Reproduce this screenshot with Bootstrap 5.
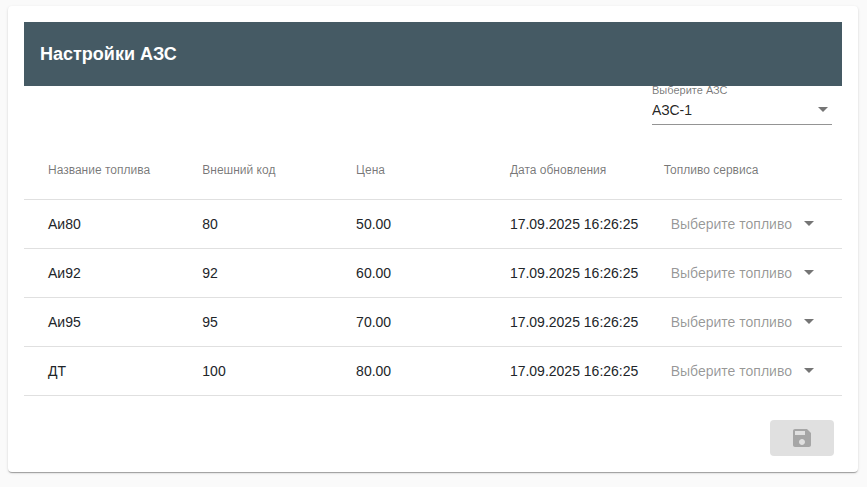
<!DOCTYPE html>
<html lang="ru">
<head>
    <meta charset="UTF-8">
    <meta name="viewport" content="width=device-width, initial-scale=1">
    <title>Настройки АЗС</title>
    <!-- Bootstrap CSS -->
    <link href="https://cdn.jsdelivr.net/npm/bootstrap@5.3.2/dist/css/bootstrap.min.css" rel="stylesheet">
    <style>
        body {
            background: #fafafa;
            color: rgba(0, 0, 0, 0.87);
            font-family: "Liberation Sans", Arial, sans-serif;
            font-size: 14px;
            line-height: 20px;
        }
        .settings-card {
            margin: 6px 9px 8px 8px;
            border-radius: 4px;
            box-shadow: 0 2px 1px -1px rgba(0, 0, 0, 0.2), 0 1px 1px 0 rgba(0, 0, 0, 0.14), 0 1px 3px 0 rgba(0, 0, 0, 0.12);
        }
        .toolbar {
            height: 64px;
            background: #455a64;
        }
        .toolbar h1 {
            font-size: 18px;
            font-weight: bold;
            line-height: 24px;
        }
        .station-field {
            width: 180px;
            margin-right: 10px;
            margin-bottom: 17px;
        }
        .station-field label {
            font-size: 11px;
            line-height: 8px;
            color: rgba(0, 0, 0, 0.54);
        }
        /* Списки со стрелкой */
        .flat-select {
            border: 0;
            border-radius: 0;
            font-size: 14px;
            line-height: 20px;
            color: rgba(0, 0, 0, 0.87);
            background-color: transparent;
            background-image: url("data:image/svg+xml,%3csvg xmlns='http://www.w3.org/2000/svg' viewBox='0 0 10 5'%3e%3cpath fill='%23757575' d='M0 0h10L5 5z'/%3e%3c/svg%3e");
            background-size: 10px 5px;
            background-position: right 4px center;
        }
        .station-field .flat-select {
            padding: 6px 16px 4px 0;
            border-bottom: 1px solid #949494;
        }
        .fuel-select {
            width: 144px;
            margin-left: 7px;
            padding: 0 16px 0 0;
            color: rgba(0, 0, 0, 0.42);
            background-position: right 1px center;
        }
        /* Таблица топлива */
        .fuel-table {
            table-layout: fixed;
        }
        .fuel-table th,
        .fuel-table td {
            padding: 0;
            height: 49px;
            color: inherit;
            background: transparent;
            border-bottom: 1px solid #e0e0e0;
            vertical-align: middle;
            white-space: nowrap;
        }
        .fuel-table th {
            height: 57px;
            font-size: 12px;
            font-weight: normal;
            color: rgba(0, 0, 0, 0.54);
        }
        .fuel-table th:first-child,
        .fuel-table th:last-child {
            width: 21.8%;
        }
        .fuel-table th:first-child,
        .fuel-table td:first-child {
            padding-left: 24px;
        }
        .save-btn,
        .save-btn:disabled {
            width: 64px;
            height: 36px;
            border: 0;
            border-radius: 4px;
            background: #e0e0e0;
            color: #a6a6a6;
            opacity: 1;
        }
    </style>
</head>
<body>
    <main class="settings-card bg-white p-3">
        <header class="toolbar d-flex align-items-center px-3">
            <h1 class="text-white mb-0">Настройки АЗС</h1>
        </header>

        <!-- Выбор АЗС -->
        <div class="station-field ms-auto">
            <label for="station" class="d-block">Выберите АЗС</label>
            <select class="form-select flat-select" id="station">
                <option selected>АЗС-1</option>
            </select>
        </div>

        <!-- Виды топлива -->
        <table class="table fuel-table mb-4">
            <thead>
                <tr>
                    <th scope="col">Название топлива</th>
                    <th scope="col">Внешний код</th>
                    <th scope="col">Цена</th>
                    <th scope="col">Дата обновления</th>
                    <th scope="col">Топливо сервиса</th>
                </tr>
            </thead>
            <tbody>
                <tr>
                    <td>Аи80</td>
                    <td>80</td>
                    <td>50.00</td>
                    <td>17.09.2025 16:26:25</td>
                    <td>
                        <select class="form-select flat-select fuel-select" aria-label="Топливо сервиса для Аи80">
                            <option value="" selected>Выберите топливо</option>
                        </select>
                    </td>
                </tr>
                <tr>
                    <td>Аи92</td>
                    <td>92</td>
                    <td>60.00</td>
                    <td>17.09.2025 16:26:25</td>
                    <td>
                        <select class="form-select flat-select fuel-select" aria-label="Топливо сервиса для Аи92">
                            <option value="" selected>Выберите топливо</option>
                        </select>
                    </td>
                </tr>
                <tr>
                    <td>Аи95</td>
                    <td>95</td>
                    <td>70.00</td>
                    <td>17.09.2025 16:26:25</td>
                    <td>
                        <select class="form-select flat-select fuel-select" aria-label="Топливо сервиса для Аи95">
                            <option value="" selected>Выберите топливо</option>
                        </select>
                    </td>
                </tr>
                <tr>
                    <td>ДТ</td>
                    <td>100</td>
                    <td>80.00</td>
                    <td>17.09.2025 16:26:25</td>
                    <td>
                        <select class="form-select flat-select fuel-select" aria-label="Топливо сервиса для ДТ">
                            <option value="" selected>Выберите топливо</option>
                        </select>
                    </td>
                </tr>
            </tbody>
        </table>

        <!-- Кнопка сохранения -->
        <div class="d-flex justify-content-end pe-2">
            <button type="button" class="btn save-btn d-flex align-items-center justify-content-center p-0" aria-label="Сохранить" disabled>
                <svg width="24" height="24" viewBox="0 0 24 24" fill="currentColor" aria-hidden="true">
                    <path d="M17 3H5c-1.11 0-2 .9-2 2v14c0 1.1.89 2 2 2h14c1.1 0 2-.9 2-2V7l-4-4zm-5 16c-1.66 0-3-1.34-3-3s1.34-3 3-3 3 1.34 3 3-1.34 3-3 3zm3-10H5V5h10v4z"/>
                </svg>
            </button>
        </div>
    </main>

    <!-- Bootstrap JS -->
    <script src="https://cdn.jsdelivr.net/npm/bootstrap@5.3.2/dist/js/bootstrap.bundle.min.js"></script>
</body>
</html>
